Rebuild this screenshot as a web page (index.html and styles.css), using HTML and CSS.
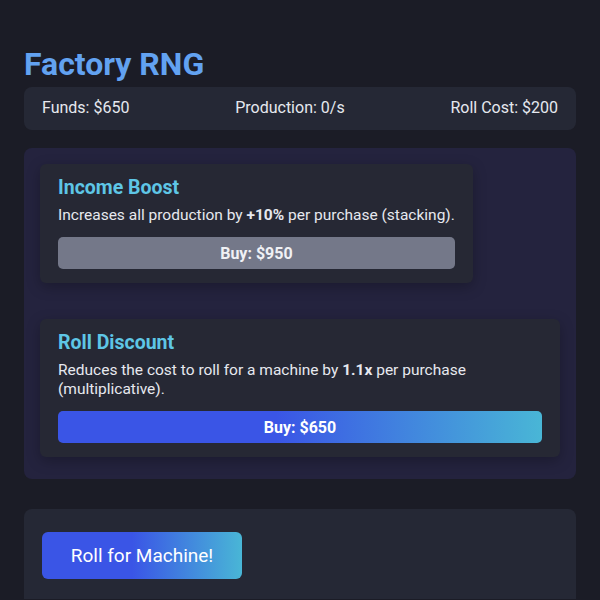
FILE: index.html
```html
<!DOCTYPE html>
<html lang="en">
<head>
    <meta charset="UTF-8">
    <meta name="viewport" content="width=device-width, initial-scale=1.0">
    <title>Factory RNG</title>
    <link rel="stylesheet" href="styles.css">
</head>
<body>
    <div class="game">
        <h1>Factory RNG</h1>

        <div class="stats">
            <span>Funds: $<span id="funds">650</span></span>
            <span>Production: <span id="production">0</span>/s</span>
            <span>Roll Cost: $<span id="rollCost">200</span></span>
        </div>

        <div class="upgrades">
            <div class="upgrade-card">
                <h2>Income Boost</h2>
                <p>Increases all production by <strong>+10%</strong> per purchase (stacking).</p>
                <button class="buy-btn" disabled>Buy: $950</button>
            </div>
            <div class="upgrade-card">
                <h2>Roll Discount</h2>
                <p>Reduces the cost to roll for a machine by <strong>1.1x</strong> per purchase (multiplicative).</p>
                <button class="buy-btn">Buy: $650</button>
            </div>
        </div>

        <div class="roll-panel">
            <button class="roll-btn">Roll for Machine!</button>
        </div>
    </div>
</body>
</html>
```

FILE: styles.css
```css
:root {
    --bg: #1b1c26;
    --panel: #252835;
    --upgrades-bg: #24233e;
    --card-bg: #262834;
    --text: #e6e8ef;
    --title: #62a2f1;
    --accent: #5ec6e6;
    --disabled: #747889;
    --grad: linear-gradient(90deg, #3a55e6 45%, #49b6d6 100%);
}

* {
    margin: 0;
    padding: 0;
    box-sizing: border-box;
    font-family: Roboto, 'Liberation Sans', sans-serif;
}

body {
    background: var(--bg);
    color: var(--text);
    padding: 44px 24px 0;
}

.game {
    max-width: 552px;
}

h1 {
    color: var(--title);
    font-size: 32px;
    font-weight: 700;
    line-height: 40px;
    margin-bottom: 3px;
}

.stats {
    display: flex;
    justify-content: space-between;
    background: var(--panel);
    border-radius: 8px;
    padding: 11px 18px 12px;
    font-size: 16px;
    line-height: 20px;
    margin-bottom: 18px;
}

/* upgrade cards size to their text and wrap once a line gets too long */
.upgrades {
    display: flex;
    flex-wrap: wrap;
    align-items: flex-start;
    row-gap: 36px;
    background: var(--upgrades-bg);
    border-radius: 8px;
    padding: 16px 16px 22px;
    margin-bottom: 30px;
}

.upgrade-card {
    background: var(--card-bg);
    border-radius: 6px;
    padding: 12px 18px 14px;
    box-shadow: 0 4px 14px rgba(0, 0, 0, 0.25);
}

.upgrade-card h2 {
    color: var(--accent);
    font-size: 19.5px;
    font-weight: 700;
    line-height: 24px;
    margin-bottom: 6px;
}

.upgrade-card p {
    font-size: 15.5px;
    line-height: 19px;
    margin-bottom: 12px;
}

.buy-btn {
    display: block;
    width: 100%;
    height: 32px;
    border: none;
    border-radius: 5px;
    background: var(--grad);
    color: #fff;
    font-size: 16px;
    font-weight: 700;
    cursor: pointer;
}

.buy-btn:disabled {
    background: var(--disabled);
    color: #f0f1f5;
    cursor: not-allowed;
}

.roll-panel {
    background: var(--panel);
    border-radius: 8px 8px 0 0;
    padding: 23px 18px 20px;
}

.roll-btn {
    width: 200px;
    height: 47px;
    border: none;
    border-radius: 6px;
    background: var(--grad);
    color: #fff;
    font-size: 19px;
    cursor: pointer;
}
```
